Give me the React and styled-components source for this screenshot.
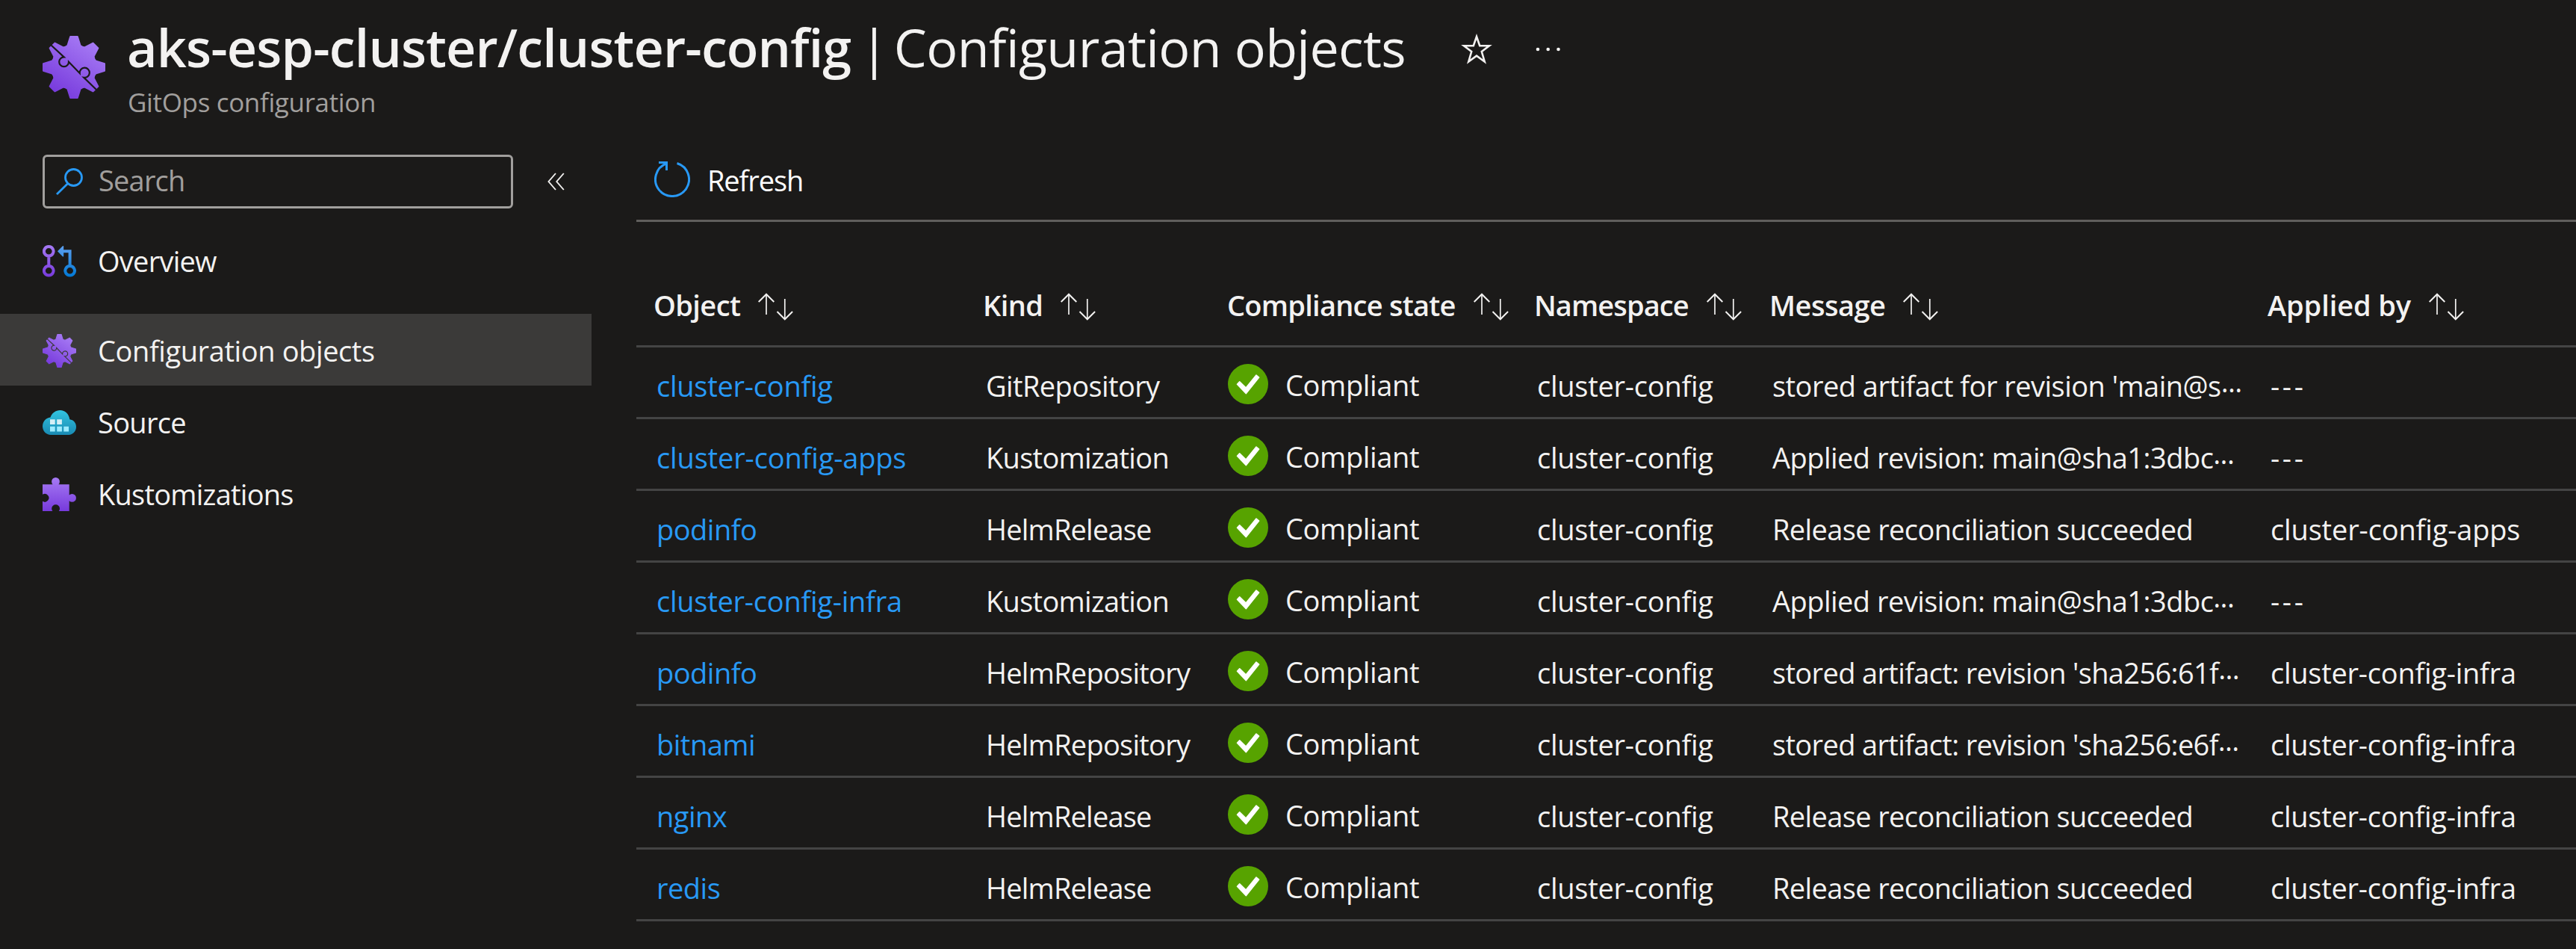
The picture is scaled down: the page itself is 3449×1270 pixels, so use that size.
import React from 'react';
import styled, { createGlobalStyle } from 'styled-components';

const c = {
  bg: '#1b1a19',
  selected: '#3b3a39',
  text: '#f3f2f1',
  muted: '#a19f9d',
  link: '#2899f5',
  rule: '#605e5c',
  rowRule: '#444444',
  ok: '#57a300',
};

const GlobalStyle = createGlobalStyle`
  * { box-sizing: border-box; }
  body {
    margin: 0;
    background: ${c.bg};
    color: ${c.text};
    font-family: 'Open Sans', 'Noto Sans', sans-serif;
    font-size: 38px;
    font-variant-ligatures: none;
    overflow: hidden;
  }
  svg { display: block; flex: none; }
`;

const Page = styled.div`
  width: 3449px;
  height: 1270px;
  display: flex;
  flex-direction: column;
  overflow: hidden;
  background: ${c.bg};
`;

const Label = styled.span`
  white-space: nowrap;
  letter-spacing: ${(p) => p.$ls ?? -0.5}px;
`;

/* Blade header */
const Header = styled.header`
  height: 186px;
  flex: none;
  display: flex;
  align-items: flex-start;
  padding-left: 57px;
`;
const HeaderIcon = styled.div`
  margin-top: 48px;
`;
const Headings = styled.div`
  margin: 20px 0 0 29px;
`;
const TitleLine = styled.div`
  display: flex;
  align-items: center;
  height: 86px;
`;
const Title = styled.h1`
  margin: 0;
  display: flex;
  font-size: 70px;
  line-height: 86px;
  font-weight: 400;
`;
const ResourceName = styled(Label)`
  font-weight: 600;
`;
const Divider = styled.span`
  margin: 0 7px 0 12px;
`;
const TitleAction = styled.span`
  margin: ${(p) => p.$top}px 0 0 ${(p) => p.$left}px;
`;
const Subtitle = styled.div`
  margin: 7px 0 0 1px;
  font-size: 35px;
  line-height: 48px;
  color: ${c.muted};
`;

const Body = styled.div`
  display: flex;
  flex: 1;
`;

/* Sidebar */
const Sidebar = styled.aside`
  width: 792px;
  flex: none;
`;
const SearchRow = styled.div`
  display: flex;
  align-items: center;
  gap: 46px;
  padding: 21px 0 0 57px;
`;
const SearchBox = styled.div`
  width: 630px;
  height: 72px;
  display: flex;
  align-items: center;
  gap: 21px;
  padding-left: 15px;
  border: 3px solid ${c.muted};
  border-radius: 6px;
  color: ${c.muted};
`;
const Placeholder = styled(Label)`
  line-height: 52px;
  margin-bottom: 4px;
`;
const Nav = styled.nav`
  padding-top: 21px;
`;
const NavItem = styled.div`
  height: 96px;
  display: flex;
  align-items: center;
  gap: 29px;
  padding: 3px 0 0 57px;
  margin-bottom: ${(p) => (p.$spaced ? 24 : 0)}px;
  background: ${(p) => (p.$selected ? c.selected : 'transparent')};
`;
const NavLabel = styled(Label)`
  margin-bottom: 1px;
`;

/* Content */
const Content = styled.main`
  flex: 1;
  min-width: 0;
  padding-left: 60px;
`;
const Toolbar = styled.div`
  height: 111px;
  display: flex;
  align-items: center;
  gap: 23px;
  padding: 0 0 0 24px;
  border-bottom: 3px solid ${c.rule};
  color: #ffffff;
`;
const ToolLabel = styled(Label)`
  margin-top: 2px;
`;
const Columns = styled.div`
  display: grid;
  grid-template-columns: 441px 327px 411px 315px 667px 1fr;
  align-items: center;
  padding-left: 23px;
`;
const HeadRow = styled(Columns)`
  height: 168px;
  padding-top: 57px;
  border-bottom: 3px solid ${c.rowRule};
  font-weight: 600;
`;
const HeadCell = styled.div`
  display: flex;
  align-items: center;
  gap: 24px;
`;
const SortGlyph = styled.span`
  margin-top: 5px;
`;
const Row = styled(Columns)`
  height: 96px;
  padding-top: 10px;
  border-bottom: 3px solid ${c.rowRule};
`;
const Cell = styled.div`
  padding: 0 0 1px 4px;
  white-space: nowrap;
  color: ${(p) => (p.$link ? c.link : c.text)};
`;
const StateCell = styled.div`
  display: flex;
  align-items: center;
  gap: 23px;
  padding: 0 0 3px 1px;
`;
const StateIcon = styled.span`
  margin-bottom: 2px;
`;
const Dots = styled.span`
  letter-spacing: -0.7px;
  line-height: 0;
  vertical-align: -5px;
`;

/* Icons */
const gearPath = (() => {
  const tooth = [[-11.3, -27.3], [-8.6, -29], [-4.8, -41], [4.8, -41], [8.6, -29]];
  const pts = [];
  for (let i = 0; i < 8; i++) {
    const a = (i * Math.PI) / 4;
    tooth.forEach(([x, y]) => {
      pts.push(
        `${(42 + x * Math.cos(a) - y * Math.sin(a)).toFixed(2)} ${(42 + x * Math.sin(a) + y * Math.cos(a)).toFixed(2)}`
      );
    });
  }
  return `M${pts.join('L')}Z`;
})();

const GearIcon = ({ size, seam, id }) => (
  <svg width={size} height={size} viewBox="0 0 84 84">
    <defs>
      <linearGradient id={id} x1="18" y1="78" x2="64" y2="6" gradientUnits="userSpaceOnUse">
        <stop offset="0" stopColor="#773adc" />
        <stop offset="1" stopColor="#a67af4" />
      </linearGradient>
    </defs>
    <path d={gearPath} fill={`url(#${id})`} stroke={`url(#${id})`} strokeWidth="2" strokeLinejoin="round" />
    <path
      d="M11 12L28.700 28.400A6.400 6.400 0 1 0 35 34.700L49.700 50A6.600 6.600 0 1 1 55.300 55.800L72 72"
      fill="none"
      stroke={seam}
      strokeWidth="2.200"
    />
  </svg>
);

const BranchIcon = () => (
  <svg width="45" height="45" viewBox="0 -1 45 45" fill="none" strokeWidth="4">
    <defs>
      <linearGradient id="brP" x1="0" y1="0" x2="0" y2="43" gradientUnits="userSpaceOnUse">
        <stop offset="0" stopColor="#a67af4" />
        <stop offset="1" stopColor="#773adc" />
      </linearGradient>
      <linearGradient id="brB" x1="0" y1="0" x2="0" y2="43" gradientUnits="userSpaceOnUse">
        <stop offset="0" stopColor="#5ea0ef" />
        <stop offset="1" stopColor="#0078d4" />
      </linearGradient>
    </defs>
    <path
      d="M8.300 14.800V28M8.300 2A6.300 6.300 0 1 1 8.200 2ZM8.300 28A6.300 6.300 0 1 1 8.200 28Z"
      stroke="url(#brP)"
    />
    <path d="M27 8.300H36.600V28M36.700 28A6.300 6.300 0 1 1 36.600 28Z" stroke="url(#brB)" />
    <path d="M20 8.300L26.600 1.600Q28.200 .4 28.200 2V14.600Q28.200 16.400 26.600 15Z" fill="url(#brB)" />
  </svg>
);

const CloudIcon = () => (
  <svg width="45" height="45" viewBox="0 0 45 45">
    <defs>
      <linearGradient id="cloud" x1="0" y1="6" x2="0" y2="39" gradientUnits="userSpaceOnUse">
        <stop offset="0" stopColor="#32c4e0" />
        <stop offset="1" stopColor="#198ab3" />
      </linearGradient>
    </defs>
    <path
      d="M11 39C5 39 0 34 0 27.500C0 21 4.800 16 10.500 15.500C12.300 10 17.500 6 23.500 6C30.300 6 35.500 11.200 36.300 18.300C41.500 19 45 23 45 28.300C45 34.200 40.500 39 35 39Z"
      fill="url(#cloud)"
    />
    <path d="M10 18.300h6.700v6.700h-6.700zM19.200 18.300h6.700v6.700h-6.700z" fill="#d4eef5" />
    <path d="M10 27.800h6.700v6.700h-6.700zM19.200 27.800h6.700v6.700h-6.700zM28.300 27.800h6.700v6.700h-6.700z" fill="#9cebff" />
  </svg>
);

const PuzzleIcon = () => (
  <svg width="45" height="45" viewBox="0 0 45 45">
    <defs>
      <linearGradient id="puz" x1="0" y1="0" x2="0" y2="45" gradientUnits="userSpaceOnUse">
        <stop offset="0" stopColor="#a67af4" />
        <stop offset="1" stopColor="#773adc" />
      </linearGradient>
    </defs>
    <path
      d="M0 9.200H13.600A5.400 5.400 0 1 1 21.400 9.200H35.700V23.600A5.400 5.400 0 1 1 35.700 31.200V45H21.800A5.400 5.400 0 1 0 13.400 45H0V31.800A5.400 5.400 0 1 0 0 22.800Z"
      fill="url(#puz)"
    />
  </svg>
);

const SearchIcon = () => (
  <svg width="36" height="36" viewBox="0 0 36 36" fill="none" stroke={c.link} strokeWidth="2.800">
    <circle cx="23.500" cy="12.500" r="11" />
    <path d="M15.800 20.500L1 35" />
  </svg>
);

const CollapseIcon = () => (
  <svg width="23" height="24" viewBox="0 0 23 24" fill="none" stroke={c.text} strokeWidth="1.900">
    <path d="M11 1L1.500 12L11 23M21.800 1L12.300 12L21.800 23" />
  </svg>
);

const RefreshIcon = () => (
  <svg width="48" height="48" viewBox="0 0 48 48" fill="none" stroke={c.link} strokeWidth="3">
    <path d="M30.500 2.500A22.500 22.500 0 1 1 16.300 2.900M6 1.500H16.500V12" />
  </svg>
);

const StarIcon = () => (
  <svg width="42" height="42" viewBox="0 0 42 42" fill="none" stroke={c.text} strokeWidth="2.600">
    <path d="M21 4L25.200 16.200H38L27.800 24L31.700 37.500L21 29.600L10.300 37.500L14.200 24L4 16.200H16.800Z" />
  </svg>
);

const MoreIcon = () => (
  <svg width="34" height="6" viewBox="0 0 34 6" fill={c.text}>
    <circle cx="3" cy="3" r="2.300" />
    <circle cx="16.700" cy="3" r="2.300" />
    <circle cx="30.500" cy="3" r="2.300" />
  </svg>
);

const SortIcon = () => (
  <svg width="48" height="38" viewBox="0 0 48 38" fill="none" stroke={c.text} strokeWidth="2">
    <path d="M.7 12L11 1.700L21.300 12M25.500 25L35.800 35.300L46.100 25" />
    <path d="M11 2V29M35.800 8V35" strokeWidth="1.700" />
  </svg>
);

const CheckIcon = () => (
  <svg width="54" height="54" viewBox="0 0 54 54">
    <circle cx="27" cy="27" r="27" fill={c.ok} />
    <path
      d="M12.500 27.200L15.700 23.800L24.200 32L38 15L41.600 18L24.400 39.600Z"
      fill="#fff"
      stroke="#fff"
      strokeWidth="1.600"
      strokeLinejoin="round"
    />
  </svg>
);

const navItems = [
  { label: 'Overview', icon: <BranchIcon />, ls: -0.75, spaced: true },
  { label: 'Configuration objects', icon: <GearIcon id="gearNav" size={45} seam={c.selected} />, ls: -0.4, selected: true },
  { label: 'Source', icon: <CloudIcon />, ls: -0.7 },
  { label: 'Kustomizations', icon: <PuzzleIcon />, ls: -0.75 },
];

const headings = [
  ['Object', -0.6],
  ['Kind', -0.6],
  ['Compliance state', -0.75],
  ['Namespace', -0.9],
  ['Message', -0.5],
  ['Applied by', -0.1],
];

const tracking = {
  GitRepository: -0.6,
  Kustomization: -0.7,
  HelmRelease: -0.8,
  HelmRepository: -0.75,
  'cluster-config': -0.25,
  'cluster-config-apps': -0.15,
  'cluster-config-infra': -0.25,
  '---': 3.6,
};

const rows = [
  ['cluster-config', 'GitRepository', "stored artifact for revision 'main@s", true, '---'],
  ['cluster-config-apps', 'Kustomization', 'Applied revision: main@sha1:3dbc', true, '---'],
  ['podinfo', 'HelmRelease', 'Release reconciliation succeeded', false, 'cluster-config-apps'],
  ['cluster-config-infra', 'Kustomization', 'Applied revision: main@sha1:3dbc', true, '---'],
  ['podinfo', 'HelmRepository', "stored artifact: revision 'sha256:61f", true, 'cluster-config-infra'],
  ['bitnami', 'HelmRepository', "stored artifact: revision 'sha256:e6f", true, 'cluster-config-infra'],
  ['nginx', 'HelmRelease', 'Release reconciliation succeeded', false, 'cluster-config-infra'],
  ['redis', 'HelmRelease', 'Release reconciliation succeeded', false, 'cluster-config-infra'],
];

const messageTracking = (m) => (m.startsWith('stored artifact:') ? -0.65 : m.startsWith('Release') ? -0.62 : -0.53);

const Text = ({ children }) => <Label $ls={tracking[children]}>{children}</Label>;

export default function App() {
  return (
    <Page>
      <GlobalStyle />
      <Header>
        <HeaderIcon>
          <GearIcon id="gearHead" size={84} seam={c.bg} />
        </HeaderIcon>
        <Headings>
          <TitleLine>
            <Title>
              <ResourceName $ls={-0.87}>aks-esp-cluster/cluster-config</ResourceName>
              <Divider>|</Divider>
              <Label $ls={-0.62}>Configuration objects</Label>
            </Title>
            <TitleAction $left={74} $top={6}>
              <StarIcon />
            </TitleAction>
            <TitleAction $left={58} $top={6}>
              <MoreIcon />
            </TitleAction>
          </TitleLine>
          <Subtitle>
            <Label $ls={-0.35}>GitOps configuration</Label>
          </Subtitle>
        </Headings>
      </Header>
      <Body>
        <Sidebar>
          <SearchRow>
            <SearchBox>
              <SearchIcon />
              <Placeholder $ls={-0.8}>Search</Placeholder>
            </SearchBox>
            <CollapseIcon />
          </SearchRow>
          <Nav>
            {navItems.map((n) => (
              <NavItem key={n.label} $selected={n.selected} $spaced={n.spaced}>
                {n.icon}
                <NavLabel $ls={n.ls}>{n.label}</NavLabel>
              </NavItem>
            ))}
          </Nav>
        </Sidebar>
        <Content>
          <Toolbar>
            <RefreshIcon />
            <ToolLabel $ls={-1.1}>Refresh</ToolLabel>
          </Toolbar>
          <HeadRow>
            {headings.map(([h, ls]) => (
              <HeadCell key={h}>
                <Label $ls={ls}>{h}</Label>
                <SortGlyph>
                  <SortIcon />
                </SortGlyph>
              </HeadCell>
            ))}
          </HeadRow>
          {rows.map(([name, kind, message, cut, by], i) => (
            <Row key={i}>
              <Cell $link>
                <Text>{name}</Text>
              </Cell>
              <Cell>
                <Text>{kind}</Text>
              </Cell>
              <StateCell>
                <StateIcon>
                  <CheckIcon />
                </StateIcon>
                <Label $ls={-0.35}>Compliant</Label>
              </StateCell>
              <Cell>
                <Text>cluster-config</Text>
              </Cell>
              <Cell>
                <Label $ls={messageTracking(message)}>{message}</Label>
                {cut && <Dots>···</Dots>}
              </Cell>
              <Cell>
                <Text>{by}</Text>
              </Cell>
            </Row>
          ))}
        </Content>
      </Body>
    </Page>
  );
}
